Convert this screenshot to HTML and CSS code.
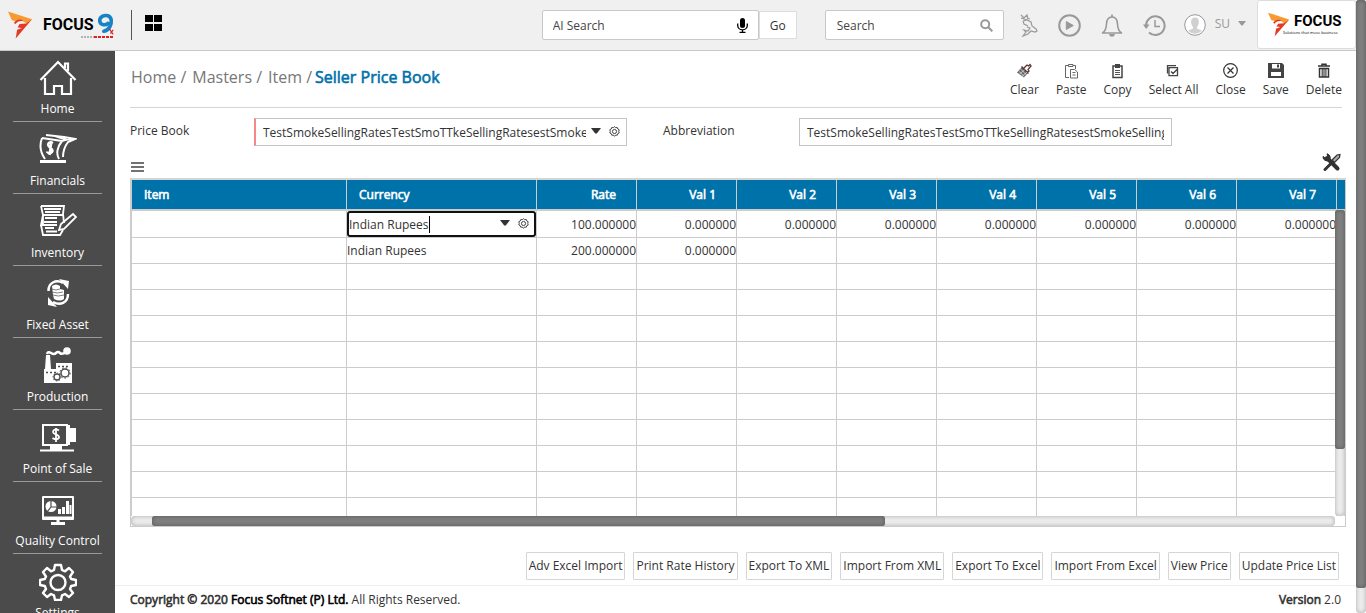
FILE: index.html
```html
<!DOCTYPE html>
<html lang="en">
<head>
<meta charset="utf-8">
<title>Seller Price Book</title>
<link rel="stylesheet" href="styles.css">
</head>
<body>
<svg width="0" height="0" class="defs" aria-hidden="true">
  <symbol id="gear" viewBox="0 0 24 24"><path fill="none" stroke="currentColor" stroke-width="2" stroke-linejoin="round" d="M12 1.500l2.600 2.200 3.400-.4 1.100 3.200 3.100 1.600-.9 3.900.9 3.300-3.100 1.600-1.100 3.200-3.400-.4L12 22.500l-2.600-2.800-3.400.4-1.100-3.200-3.100-1.600.9-3.300-.9-3.900 3.100-1.600L6 3.300l3.400.4z"/><circle cx="12" cy="12" r="4.500" fill="none" stroke="currentColor" stroke-width="2"/></symbol>
  <symbol id="caret" viewBox="0 0 10 6"><path fill="currentColor" d="M0 0h10L5.800 5.500H4.200z"/></symbol>
  <symbol id="arrowmark" viewBox="0 0 26 28"><path fill="#f79a32" d="M0 0l25 8-5 5-6-4-6 1-4-1z"/><path fill="#e23a24" d="M25 8L8 28l1.500-9 5-2-4.500-.5 2-3.500 7-.5z"/><path fill="#e23a24" d="M6 12c3-4.500 8-4.500 10-2-4-.8-6.500.5-8 3z"/></symbol>
</svg>
<div class="app">
  <header class="topbar">
    <a class="brand" href="#" aria-label="Focus 9">
      <svg class="brand-mark"><use href="#arrowmark"/></svg>
      <span class="brand-name">FOCUS</span>
      <svg class="brand-nine" viewBox="0 0 20 28"><path fill="none" stroke="#1583c5" stroke-width="4" stroke-linecap="round" d="M12 11.500c-2 2.500-8.500 2.500-9-2.500C2.500 4 8 2 12 3c5 1.500 4.500 8 2.500 12-1.500 3-4 5-7 5.500"/><path stroke="#d8232a" stroke-width="1.300" fill="none" d="M14 18l4 6M18 19l-3 4"/></svg>
      <svg class="brand-line" viewBox="0 0 34 4"><path d="M0 2h13" stroke="#777" stroke-dasharray="2 1"/><path d="M13 2h19" stroke="#d8232a" stroke-width="2" stroke-dasharray="3 1"/></svg>
    </a>
    <span class="brand-rule"></span>
    <button class="icon-btn" aria-label="Modules"><svg width="17" height="16" viewBox="0 0 17 16"><path d="M0 0h8v7H0zM9 0h8v7H9zM0 9h8v7H0zM9 9h8v7H9z"/></svg></button>
    <div class="top-right">
      <form class="ai-search">
        <div class="search-box ai"><input type="text" aria-label="AI Search" placeholder="AI Search">
          <svg width="11" height="15" viewBox="0 0 11 15"><rect x="3" width="5" height="10" rx="2.500"/><path d="M.7 5.500v2a4.800 4.300 0 0 0 9.600 0v-2M5.500 12v2M2.500 14.300h6" fill="none" stroke="#000" stroke-width="1.300"/></svg></div>
        <button class="go" type="button">Go</button>
      </form>
      <div class="search-box main-search"><input type="text" aria-label="Search" placeholder="Search">
        <svg width="13" height="13" viewBox="0 0 13 13" fill="none" stroke="#999" stroke-width="2"><circle cx="5.200" cy="5.200" r="4"/><path d="M8 8l4.300 4.300"/></svg></div>
      <nav class="top-icons">
        <button class="icon-btn" aria-label="Assistant"><svg width="18" height="23" viewBox="0 0 18 23" fill="none" stroke="#999" stroke-width="1.200"><path d="M1 1l3 3 3-3 1 4M1 4l6 2M3 7l4-1 4 2 1 4 4 3 1 2-2 1-4-1-3 3-5 2 3-4-2-2 4 1 2-3-3-1M3 7l1 3 4 2M10 5l-3-1"/></svg></button>
        <button class="icon-btn" aria-label="Play"><svg width="23" height="23" viewBox="0 0 23 23"><circle cx="11.500" cy="11.500" r="10.300" fill="none" stroke="#999" stroke-width="2"/><path d="M8.300 7.500v8l7-4z" fill="#999" stroke="#999" stroke-linejoin="round"/></svg></button>
        <button class="icon-btn" aria-label="Notifications"><svg width="22" height="23" viewBox="0 0 22 23" fill="none" stroke="#999" stroke-width="1.600"><path d="M1.500 19c3-2 3.800-4 4-9 .2-4.500 2.500-7 5.500-7s5.300 2.500 5.500 7c.2 5 1 7 4 9z" stroke-linejoin="round"/><path d="M11 .5V3"/><path d="M9 20a2 2 0 0 0 4 0" fill="#999"/></svg></button>
        <button class="icon-btn" aria-label="History"><svg width="23" height="23" viewBox="0 0 23 23" fill="none" stroke="#999" stroke-width="2"><path d="M3 12a9.300 9.300 0 1 1 3 6.500"/><path d="M12 6v6.500h5" stroke-width="1.500"/><path d="M0 10.500h6.500L3.200 15z" fill="#999" stroke="none"/></svg></button>
      </nav>
      <button class="user"><svg width="22" height="22" viewBox="0 0 22 22"><circle cx="11" cy="11" r="10.300" fill="#fff" stroke="#999"/><path fill="#d0d0d0" d="M11 3.500c3.200 0 4.200 2.500 3.800 5.500-.3 2-1 3-1.800 3.800v1.700l5 2.300a10 10 0 0 1-14 0l5-2.300v-1.700C8.200 12 7.500 11 7.200 9c-.4-3 .6-5.500 3.800-5.500z"/></svg><span>SU</span><svg width="8" height="5"><use href="#caret"/></svg></button>
      <a class="client-logo" href="#" aria-label="Focus Softnet">
        <svg class="client-mark"><use href="#arrowmark"/></svg>
        <span class="client-text"><b>FOCUS</b><small>Solutions that move business</small></span>
      </a>
    </div>
  </header>
  <div class="body">
    <nav class="sidebar">
      <a href="#"><svg viewBox="0 0 38 38" fill="none" stroke="#fff" stroke-width="2.200"><path d="M1.500 21L19 3l17.500 18M6 19v16h9v-8h8v8h9V19M26 9V4.500h3V12"/></svg><span>Home</span></a>
      <a href="#"><svg viewBox="0 0 38 38" fill="none" stroke="#fff" stroke-width="2"><path d="M3 7c-3 8-2 14 3 21M3 7l20 3c-5 6-6 13-3 18M7 4l18 2 11 2-7 3c-3 4-5 9-5 15M16 5l12 4M23 10c4-1 6-2 9-2"/><path d="M1 30.500h26" stroke-width="3"/><path d="M14 12c-4-2-6 1-4 3.500s5 3 3 5.500-5 .5-5-.5M12.500 10l-2 14" stroke-width="2.400"/></svg><span>Financials</span></a>
      <a href="#"><svg viewBox="0 0 38 38" fill="none" stroke="#fff" stroke-width="1.800"><path d="M2 3h23l-1 8 1 9M2 3l2 9H24M4 12l-2 10h16M2 22l2 10h17l3-5M5 6h17M6 9h15M6 15h12M5 19h13M6 25h9M7 28.500h11M4 12v10"/><path d="M20 27l2-6L34 11l3 3-12 12z"/></svg><span>Inventory</span></a>
      <a href="#"><svg viewBox="0 0 38 38" fill="none" stroke="#fff"><path stroke-width="2.500" d="M9.500 16C9 8 17 4 24 8M29 19c0 9-8 12-15 8"/><path fill="#fff" stroke="none" d="M20 4l10 2-1 8zM18 32l-9-2 0-8z"/><path fill="#fff" stroke="none" d="M13 11q4-3 8 0v3l4 1v9q-4 3-10 0l-1-4z"/><path stroke="#4b4b4b" stroke-width=".7" d="M13 14q4 2 8 0M13 17q5 2 11 0M14 20q5 2 11 0"/></svg><span>Fixed Asset</span></a>
      <a href="#"><svg viewBox="0 0 38 38"><path fill="#fff" d="M7 8h4l1 14h5v-6h16v20H5V22h1z"/><circle cx="28" cy="4" r="3.800" fill="#fff"/><path d="M8 7q1-3 4-1t5 0 4 0 6-1" fill="none" stroke="#fff" stroke-width="2.500"/><path stroke="#4b4b4b" stroke-width="1.500" d="M19 19.500h12M7 25.500h10" stroke-dasharray="2 2"/><g fill="none" stroke="#4b4b4b"><circle cx="26" cy="26" r="4" stroke-width="1.500"/><circle cx="26" cy="26" r="5.200" stroke-dasharray="1.500 2"/><circle cx="18" cy="30" r="3" stroke-width="1.300"/><circle cx="18" cy="30" r="4" stroke-dasharray="1.200 1.800"/></g></svg><span>Production</span></a>
      <a href="#"><svg viewBox="0 0 38 38" fill="none" stroke="#fff" stroke-width="2"><path d="M4 6h24v20H4zM1 31.500h34" /><path stroke-width="5" d="M11 29h12"/><path fill="#fff" d="M32 10h4v12h-4z"/><path d="M20 11.500c-3-2-6-.8-6 1.500s6 2.500 6 5-4 3-6.500 1M17 9v14" stroke-width="1.800"/><path d="M30 6v20"/></svg><span>Point of Sale</span></a>
      <a href="#"><svg viewBox="0 0 38 38" fill="none" stroke="#fff" stroke-width="2"><path d="M4 6h30v22H4z" stroke-linejoin="round"/><path stroke-width="3" d="M4 27h30M12 32.500h14M19 28v4"/><circle cx="12" cy="15.500" r="5.500" fill="#fff" stroke="none"/><path stroke="#4b4b4b" stroke-width="1.200" d="M12 10v6h6M12 16l-4 5"/><path stroke-width="3" d="M20.500 23v-5M24.500 23v-7M28.500 23V10"/><path d="M31.500 23v-9"/></svg><span>Quality Control</span></a>
      <a href="#"><svg viewBox="0 0 38 38" fill="none" stroke="#fff" stroke-width="2.400" stroke-linejoin="round"><path d="M16 2h6l1 5 3 1.300L30 5l4 4-3 4.500L32.200 16l4.800 1v5l-4.800 1-1.200 3 3 4-4 4-4-3-3 1.300-1 4.700h-6l-1-4.700L12 31l-4 3-4-4 3-4-1.200-3L1 22v-5l4.800-1L7 13.500 4 9l4-4 4 3.300L15 7z"/><circle cx="19" cy="19.500" r="7.500"/></svg><span>Settings</span></a>
    </nav>
    <main class="content">
      <div class="page-head">
        <div class="crumbs"><a href="#">Home /</a><a href="#">Masters /</a><a href="#">Item /</a><h1>Seller Price Book</h1></div>
        <div class="actions">
          <button><svg viewBox="0 0 16 16"><path fill="#666" d="M6 4l6 6-4 4.500-7-5z"/><path fill="none" stroke="#5a3434" stroke-width="1.300" d="M5.500 3.500l7 7M8 5l3-3 1.500 1L14 1.500 15 3l-3 3.500 1 1.500-1.500 1"/><path stroke="#ddd" stroke-width=".8" d="M4.500 6l6 6M2.500 8l6 5.500M8.500 7l-5 4M11 9l-5 4.500"/></svg>Clear</button>
          <button><svg viewBox="0 0 16 16" fill="none" stroke="#666"><path d="M6 14.500H2.500v-12h3M10 2.500h2.500V6M5.500 1.500h4.500v2H5.500zM7.500 6.500h4l3 2.500v6h-7zM9.500 9.500h3M9.500 12h3"/></svg>Paste</button>
          <button><svg viewBox="0 0 16 16"><path fill="none" stroke="#444" stroke-width="1.500" d="M3 3h9v11.500H3z"/><path fill="#444" d="M5 1h5v4H5z"/><path stroke="#555" d="M5 7.500h5M5 9.500h5M5 11.500h5"/></svg>Copy</button>
          <button><svg viewBox="0 0 16 16" fill="none" stroke="#444" stroke-width="1.300"><path d="M1.500 10.500V2.700H10M3 4.700h8.500v8H3zM5 8.500l2 2 4-4"/></svg>Select All</button>
          <button><svg viewBox="0 0 16 16" fill="none" stroke="#333" stroke-width="1.200"><circle cx="7.500" cy="7.500" r="6.800"/><path d="M4.500 4.500l6 6M10.500 4.500l-6 6"/></svg>Close</button>
          <button><svg viewBox="0 0 16 16"><path fill="#444" d="M0 0h14l2 2v13H0z"/><path fill="#fff" d="M4 1h8v4.500H4zM3 9h10v4H3z"/><path fill="#444" d="M9 1.500h2v3H9z"/></svg>Save</button>
          <button><svg viewBox="0 0 16 16" fill="none" stroke="#333" stroke-width="1.500"><path d="M2 3h12M6 3V1.200h4V3M3.500 5.500h9v8.500h-9z"/><path d="M6.200 6v8M8 6v8M9.900 6v8" stroke-width="1.100"/></svg>Delete</button>
        </div>
      </div>
      <form class="fields">
        <label for="book">Price Book</label>
        <div class="box required"><input id="book" type="text" value="TestSmokeSellingRatesTestSmoTTkeSellingRatesestSmokeSellingRates"><svg width="10" height="6"><use href="#caret"/></svg><svg width="11" height="11"><use href="#gear"/></svg></div>
        <label for="abbr" class="second">Abbreviation</label>
        <div class="box"><input id="abbr" type="text" value="TestSmokeSellingRatesTestSmoTTkeSellingRatesestSmokeSellingRates"></div>
      </form>
      <div class="grid-tools">
        <button class="icon-btn" aria-label="Menu"><svg width="14" height="10" viewBox="0 0 14 10"><path d="M0 1h13M0 5h13M0 9h13" stroke="#444" stroke-width="1.400"/></svg></button>
        <button class="icon-btn" aria-label="Customize"><svg width="19" height="19" viewBox="0 0 19 19"><path d="M5 5l10.500 10.500" stroke="#333" stroke-width="4" stroke-linecap="round"/><path d="M1 3.500A4 4 0 0 0 7.500 7 4 4 0 0 0 5 .8L5.800 4 4 5.300z" fill="#333" stroke="#333"/><path d="M3 16.500l6.500-6.500" stroke="#333" stroke-width="3" stroke-linecap="round"/><path d="M10 7l5-5 3-.5-.5 3-5 5z" fill="#aaa" stroke="#333" stroke-width="1.200"/></svg></button>
      </div>
      <section class="sheet">
        <div class="sheet-view">
          <table>
            <colgroup><col class="c-item"><col class="c-cur"><col class="c-num"><col class="c-num"><col class="c-num"><col class="c-num"><col class="c-num"><col class="c-num"><col class="c-num"><col class="c-num"><col></colgroup>
            <thead><tr><th class="txt">Item</th><th class="txt">Currency</th><th>Rate</th><th>Val 1</th><th>Val 2</th><th>Val 3</th><th>Val 4</th><th>Val 5</th><th>Val 6</th><th>Val 7</th><th></th></tr></thead>
            <tbody>
              <tr class="first"><td></td><td class="editing"><div class="editor"><input type="text" aria-label="Currency" value="Indian Rupees"><i class="cursor"></i><svg width="10" height="6"><use href="#caret"/></svg><svg width="11" height="11"><use href="#gear"/></svg></div></td><td>100.000000</td><td>0.000000</td><td>0.000000</td><td>0.000000</td><td>0.000000</td><td>0.000000</td><td>0.000000</td><td>0.000000</td><td></td></tr>
              <tr><td></td><td class="txt">Indian Rupees</td><td>200.000000</td><td>0.000000</td><td></td><td></td><td></td><td></td><td></td><td></td><td></td></tr>
              <tr><td></td><td></td><td></td><td></td><td></td><td></td><td></td><td></td><td></td><td></td><td></td></tr>
              <tr><td></td><td></td><td></td><td></td><td></td><td></td><td></td><td></td><td></td><td></td><td></td></tr>
              <tr><td></td><td></td><td></td><td></td><td></td><td></td><td></td><td></td><td></td><td></td><td></td></tr>
              <tr><td></td><td></td><td></td><td></td><td></td><td></td><td></td><td></td><td></td><td></td><td></td></tr>
              <tr><td></td><td></td><td></td><td></td><td></td><td></td><td></td><td></td><td></td><td></td><td></td></tr>
              <tr><td></td><td></td><td></td><td></td><td></td><td></td><td></td><td></td><td></td><td></td><td></td></tr>
              <tr><td></td><td></td><td></td><td></td><td></td><td></td><td></td><td></td><td></td><td></td><td></td></tr>
              <tr><td></td><td></td><td></td><td></td><td></td><td></td><td></td><td></td><td></td><td></td><td></td></tr>
              <tr><td></td><td></td><td></td><td></td><td></td><td></td><td></td><td></td><td></td><td></td><td></td></tr>
              <tr><td></td><td></td><td></td><td></td><td></td><td></td><td></td><td></td><td></td><td></td><td></td></tr>
            </tbody>
          </table>
        </div>
        <div class="bar vbar"><div class="thumb"></div></div>
        <div class="bar hbar"><div class="thumb"></div></div>
      </section>
      <div class="commands">
        <button>Adv Excel Import</button><button>Print Rate History</button><button>Export To XML</button><button>Import From XML</button><button>Export To Excel</button><button>Import From Excel</button><button>View Price</button><button>Update Price List</button>
      </div>
      <footer><span><b>Copyright © 2020 <a href="#">Focus Softnet (P) Ltd.</a></b> All Rights Reserved.</span><span><b>Version</b> 2.0</span></footer>
    </main>
  </div>
</div>
<div class="bar page-bar"><div class="thumb"></div></div>
</body>
</html>
```
FILE: styles.css
```css
* { box-sizing: border-box; }
body {
  margin: 0;
  height: 100vh;
  display: flex;
  overflow: hidden;
  background: #fff;
  color: #333;
  font: 12px/17px "Open Sans", sans-serif;
}
button, input { font: inherit; color: inherit; }
button { padding: 0; border: 0; background: none; }
a { color: inherit; text-decoration: none; }
svg { display: block; flex: none; }
.defs { position: absolute; }
.icon-btn { display: block; }

.app { flex: 1; min-width: 0; display: flex; flex-direction: column; }

/* Top bar */
.topbar {
  height: 51px;
  flex: none;
  display: flex;
  align-items: center;
  padding-left: 8px;
  background: #f0f0f0;
  border-bottom: 1px solid #c8c8c8;
}
.brand { position: relative; display: flex; align-items: center; width: 108px; }
.brand-mark { width: 25px; height: 28px; }
.brand-name {
  margin-left: 10px;
  color: #000;
  font: bold 16px/28px Roboto, sans-serif;
}
.brand-nine { width: 18px; height: 25px; margin-left: 3px; }
.brand-line { position: absolute; right: 1px; bottom: 0; width: 34px; height: 4px; }
.brand-rule { width: 1px; height: 30px; margin: 0 13px 0 15px; background: #555; }
.topbar > .icon-btn { margin-bottom: 4px; }
.top-right { margin-left: auto; height: 50px; display: flex; align-items: center; }
.ai-search { display: flex; align-items: center; }
.search-box {
  height: 30px;
  display: flex;
  align-items: center;
  padding: 0 10px;
  background: #fff;
  border: 1px solid #c8c8c8;
  border-radius: 2px;
}
.search-box input { flex: 1; min-width: 0; padding: 0; border: 0; outline: 0; background: none; }
.search-box input::placeholder { color: #444; opacity: 1; }
.ai { width: 217px; }
.main-search { width: 179px; margin-left: 28px; }
.main-search input { padding-left: 1px; }
.go { width: 38px; height: 28px; background: #fff; border: 1px solid #ddd; }
.top-icons { display: flex; align-items: center; gap: 20px; margin-left: 16px; }
.user { display: flex; align-items: center; gap: 9px; margin-left: 18px; color: #999; }
.user span { line-height: 20px; padding-bottom: 3px; }
.user svg:last-child { margin: 0 0 3px -1px; }
.client-logo {
  width: 99px;
  height: 49px;
  display: flex;
  align-items: center;
  gap: 4px;
  margin: 0 0 1px 11px;
  padding-left: 10px;
  background: #fff;
  border: 1px solid #ddd;
  border-radius: 3px;
}
.client-mark { width: 22px; height: 25px; }
.client-text { display: flex; flex-direction: column; color: #000; width: 50px; }
.client-text b { font: bold 15px/17px Roboto, sans-serif; }
.client-text small { font-size: 4px; line-height: 6px; margin-left: -11px; white-space: nowrap; }

/* Sidebar */
.body { flex: 1; min-height: 0; display: flex; }
.sidebar { width: 115px; flex: none; overflow: hidden; background: #4b4b4b; color: #fff; }
.sidebar a {
  height: 72px;
  margin: 0 13px;
  padding-top: 9px;
  display: flex;
  flex-direction: column;
  align-items: center;
  border-bottom: 1px solid #999;
}
.sidebar a:first-child { height: 71px; padding-top: 8px; }
.sidebar svg { width: 38px; height: 38px; }
.sidebar span { margin-top: 3px; white-space: nowrap; }

/* Content */
.content { flex: 1; min-width: 0; display: flex; flex-direction: column; }
.page-head {
  height: 57px;
  flex: none;
  display: flex;
  justify-content: space-between;
  margin: 0 14px 0 15px;
  border-bottom: 1px solid #d4d4d4;
}
.crumbs { display: flex; gap: 6px; padding: 15px 0 0 1px; font-size: 16px; line-height: 22px; color: #777; white-space: nowrap; }
.crumbs h1 { margin: 0 0 0 -3px; font-size: 16px; line-height: 22px; color: #0072aa; }
/* Emphasis thickens the regular face so that its widths stay the same */
.crumbs h1, th, footer b { font-weight: 400; -webkit-text-stroke: 0.6px; }
.actions { display: flex; gap: 17px; align-items: flex-start; padding-top: 12px; }
.actions button { display: flex; flex-direction: column; align-items: center; gap: 2px; }
.actions svg { width: 16px; height: 16px; }

.fields {
  display: grid;
  grid-template-columns: 124fr 373fr 172fr 373fr 174fr;
  padding: 10px 10px 0 15px;
}
.fields label { padding-top: 4px; }
.fields .second { padding-left: 36px; }
.box {
  min-width: 0;
  height: 28px;
  display: flex;
  align-items: center;
  gap: 8px;
  padding: 0 7px;
  border: 1px solid #c4c4c4;
}
.box input { flex: 1; min-width: 0; height: 24px; padding: 0; border: 0; outline: 0; background: none; }
.required { border-left: 2px solid #f78888; padding-right: 6px; }
.box svg { margin-bottom: 2px; }
.box input + svg { margin-left: -3px; }

.grid-tools {
  display: flex;
  align-items: center;
  justify-content: space-between;
  height: 32px;
  padding: 0 15px 0 16px;
}
.grid-tools .icon-btn:first-child { margin-top: 10px; }

.sheet {
  flex: 1;
  min-height: 0;
  display: grid;
  grid-template: minmax(0, 1fr) 10px / minmax(0, 1fr) 10px;
  margin: 0 10px 0 15px;
  border: 1px solid #ccc;
  border-top: 2px solid #d4d4d4;
}
.sheet-view { grid-area: 1 / 1 / 2 / 3; overflow: hidden; border-left: 1px solid #ccc; }
table { width: 100%; border-collapse: separate; border-spacing: 0; table-layout: fixed; }
.c-item { width: 215px; }
.c-cur { width: 190px; }
.c-num { width: 100px; }
th {
  height: 31px;
  padding: 0 20px 0 12px;
  background: #0072aa;
  border-right: 1px solid #ccc;
  border-bottom: 2px solid #ccc;
  color: #fff;
  text-align: right;
}
th:last-child { border-right: 0; }
th.txt, td.txt { text-align: left; }
td {
  height: 26px;
  padding: 0;
  text-align: right;
  border-right: 1px solid #ccc;
  border-bottom: 1px solid #ccc;
}
.first td { height: 27px; }
.editor {
  height: 26px;
  display: flex;
  align-items: center;
  padding: 0 5px 0 0;
  border: 2px solid #111;
  border-radius: 3px;
}
.editor input { width: 80px; height: 20px; padding: 0; border: 0; outline: 0; background: none; }
.cursor { width: 1px; height: 17px; background: #000; }
.editor svg { color: #333; margin-bottom: 2px; }
.cursor + svg { margin-left: auto; margin-right: 8px; }

/* Scroll bars */
.bar { background: #ececec; box-shadow: inset 0 0 4px #aaa; border-radius: 4px; }
.thumb { background: #808080; box-shadow: inset 0 0 4px #555; border-radius: 3px; }
.vbar { grid-area: 1 / 2; margin-top: 30px; }
.vbar .thumb { height: 78%; }
.hbar { grid-area: 2 / 1; padding-left: 21px; }
.hbar .thumb { width: 62%; height: 100%; }
.page-bar { width: 10px; flex: none; }
.page-bar .thumb { height: 96%; }

.commands { display: flex; justify-content: flex-end; gap: 8px; padding: 25px 17px 5px 15px; }
.commands button { height: 28px; padding: 0 2px 2px; white-space: nowrap; border: 1px solid #d6d6d6; border-radius: 1px; }
footer {
  height: 28px;
  flex: none;
  display: flex;
  justify-content: space-between;
  padding: 5px 15px 0 15px;
  border-top: 1px solid #eee;
}
footer a { color: #000; }
```
